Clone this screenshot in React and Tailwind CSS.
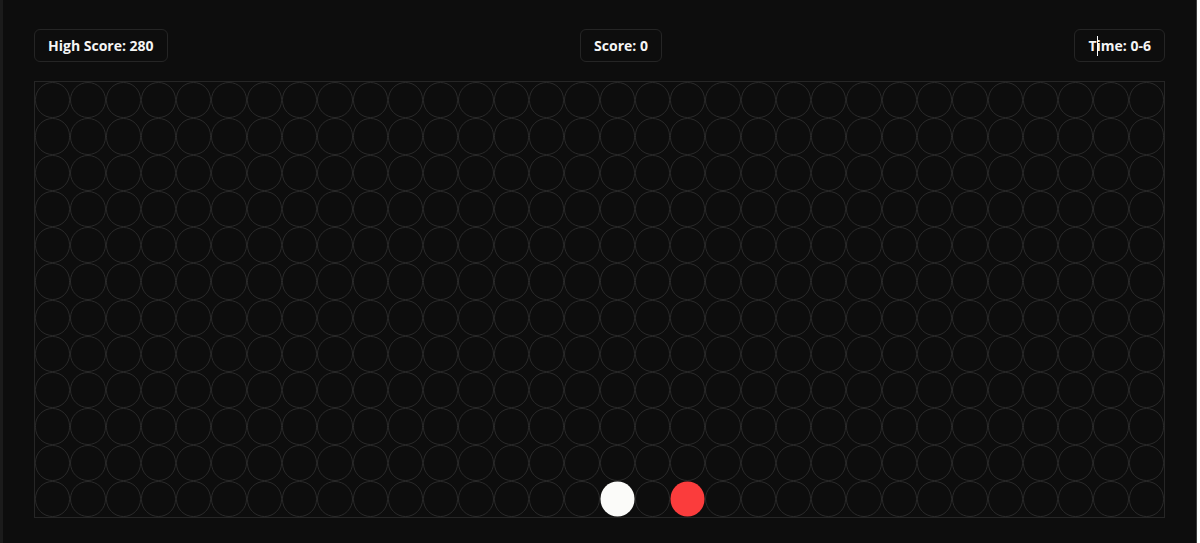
import React from "react";

const COLS = 32;
const ROWS = 12;

// balls on the board: [row, col, colour]
const balls = {
  "11-16": "bg-[#fbfbf9]",
  "11-18": "bg-[#fb3c3c]",
};

const StatBox = ({ children, cursor = false }) => (
  <div className="relative flex h-[33px] items-center rounded-md border border-[#252525] px-[13px] text-[14px] font-bold text-[#f5f5f5]">
    {children}
    {cursor && (
      <span className="absolute left-[22px] top-[6px] h-[20px] w-px bg-white" />
    )}
  </div>
);

export default function App() {
  const cells = [];
  for (let r = 0; r < ROWS; r++) {
    for (let c = 0; c < COLS; c++) {
      const ball = balls[`${r}-${c}`];
      cells.push(
        <div key={`${r}-${c}`} className="flex items-center justify-center">
          <div
            className={`h-full w-full rounded-full ${
              ball ? `${ball} scale-[0.97]` : "border border-[#2a2a2a]"
            }`}
          />
        </div>
      );
    }
  }

  return (
    <div
      className="flex h-[543px] w-full overflow-hidden"
      style={{ fontFamily: '"Open Sans", "Noto Sans", sans-serif' }}
    >
      {/* left window edge */}
      <div className="w-[3px] bg-[#1b1b1b]" />

      <main className="flex flex-1 flex-col bg-[#0d0d0d] px-[31px] pt-[29px]">
        {/* score bar */}
        <header className="flex items-center justify-between">
          <StatBox>High Score: 280</StatBox>
          <StatBox>Score: 0</StatBox>
          <StatBox cursor>Time: 0-6</StatBox>
        </header>

        {/* board */}
        <div className="mt-[19px] grid h-[437px] grid-cols-32 grid-rows-12 border border-[#262626]">
          {cells}
        </div>
      </main>

      {/* right window edge */}
      <div className="w-px bg-[#3a3a3a]" />
      <div className="w-[3px] bg-white" />
    </div>
  );
}
